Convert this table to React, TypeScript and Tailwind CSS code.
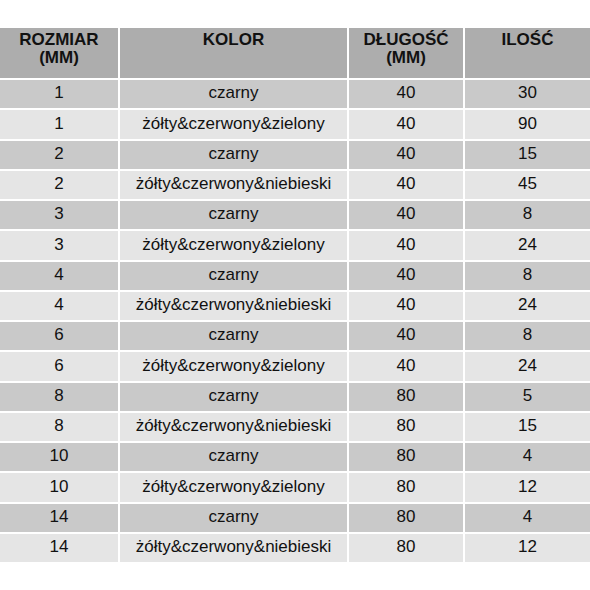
const ROWS: [string, string, string, string][] = [
  ['1', 'czarny', '40', '30'],
  ['1', 'żółty&czerwony&zielony', '40', '90'],
  ['2', 'czarny', '40', '15'],
  ['2', 'żółty&czerwony&niebieski', '40', '45'],
  ['3', 'czarny', '40', '8'],
  ['3', 'żółty&czerwony&zielony', '40', '24'],
  ['4', 'czarny', '40', '8'],
  ['4', 'żółty&czerwony&niebieski', '40', '24'],
  ['6', 'czarny', '40', '8'],
  ['6', 'żółty&czerwony&zielony', '40', '24'],
  ['8', 'czarny', '80', '5'],
  ['8', 'żółty&czerwony&niebieski', '80', '15'],
  ['10', 'czarny', '80', '4'],
  ['10', 'żółty&czerwony&zielony', '80', '12'],
  ['14', 'czarny', '80', '4'],
  ['14', 'żółty&czerwony&niebieski', '80', '12'],
]

const HEADERS = [['ROZMIAR', '(MM)'], ['KOLOR'], ['DŁUGOŚĆ', '(MM)'], ['ILOŚĆ']]

export default function App() {
  return (
    <div className="h-[590px] w-[590px] bg-white pt-[28px] font-['Liberation_Sans',Arial,sans-serif] text-[#111]">
      <div className="grid grid-cols-[118px_227px_114px_125px] gap-x-[2px] gap-y-[2px]">
        {HEADERS.map((lines, i) => (
          <div key={i} className="flex h-[50px] flex-col items-center bg-[#adadad] pt-[3px] text-[17px] font-bold leading-[18px]">
            {lines.map((l) => (
              <span key={l}>{l}</span>
            ))}
          </div>
        ))}
        {ROWS.map((row, r) =>
          row.map((cell, c) => (
            <div
              key={`${r}-${c}`}
              className={`flex h-[28.25px] items-center justify-center pb-[2px] text-[17px] ${r % 2 === 0 ? 'bg-[#c9c9c9]' : 'bg-[#e5e5e5]'}`}
            >
              {cell}
            </div>
          )),
        )}
      </div>
    </div>
  )
}
